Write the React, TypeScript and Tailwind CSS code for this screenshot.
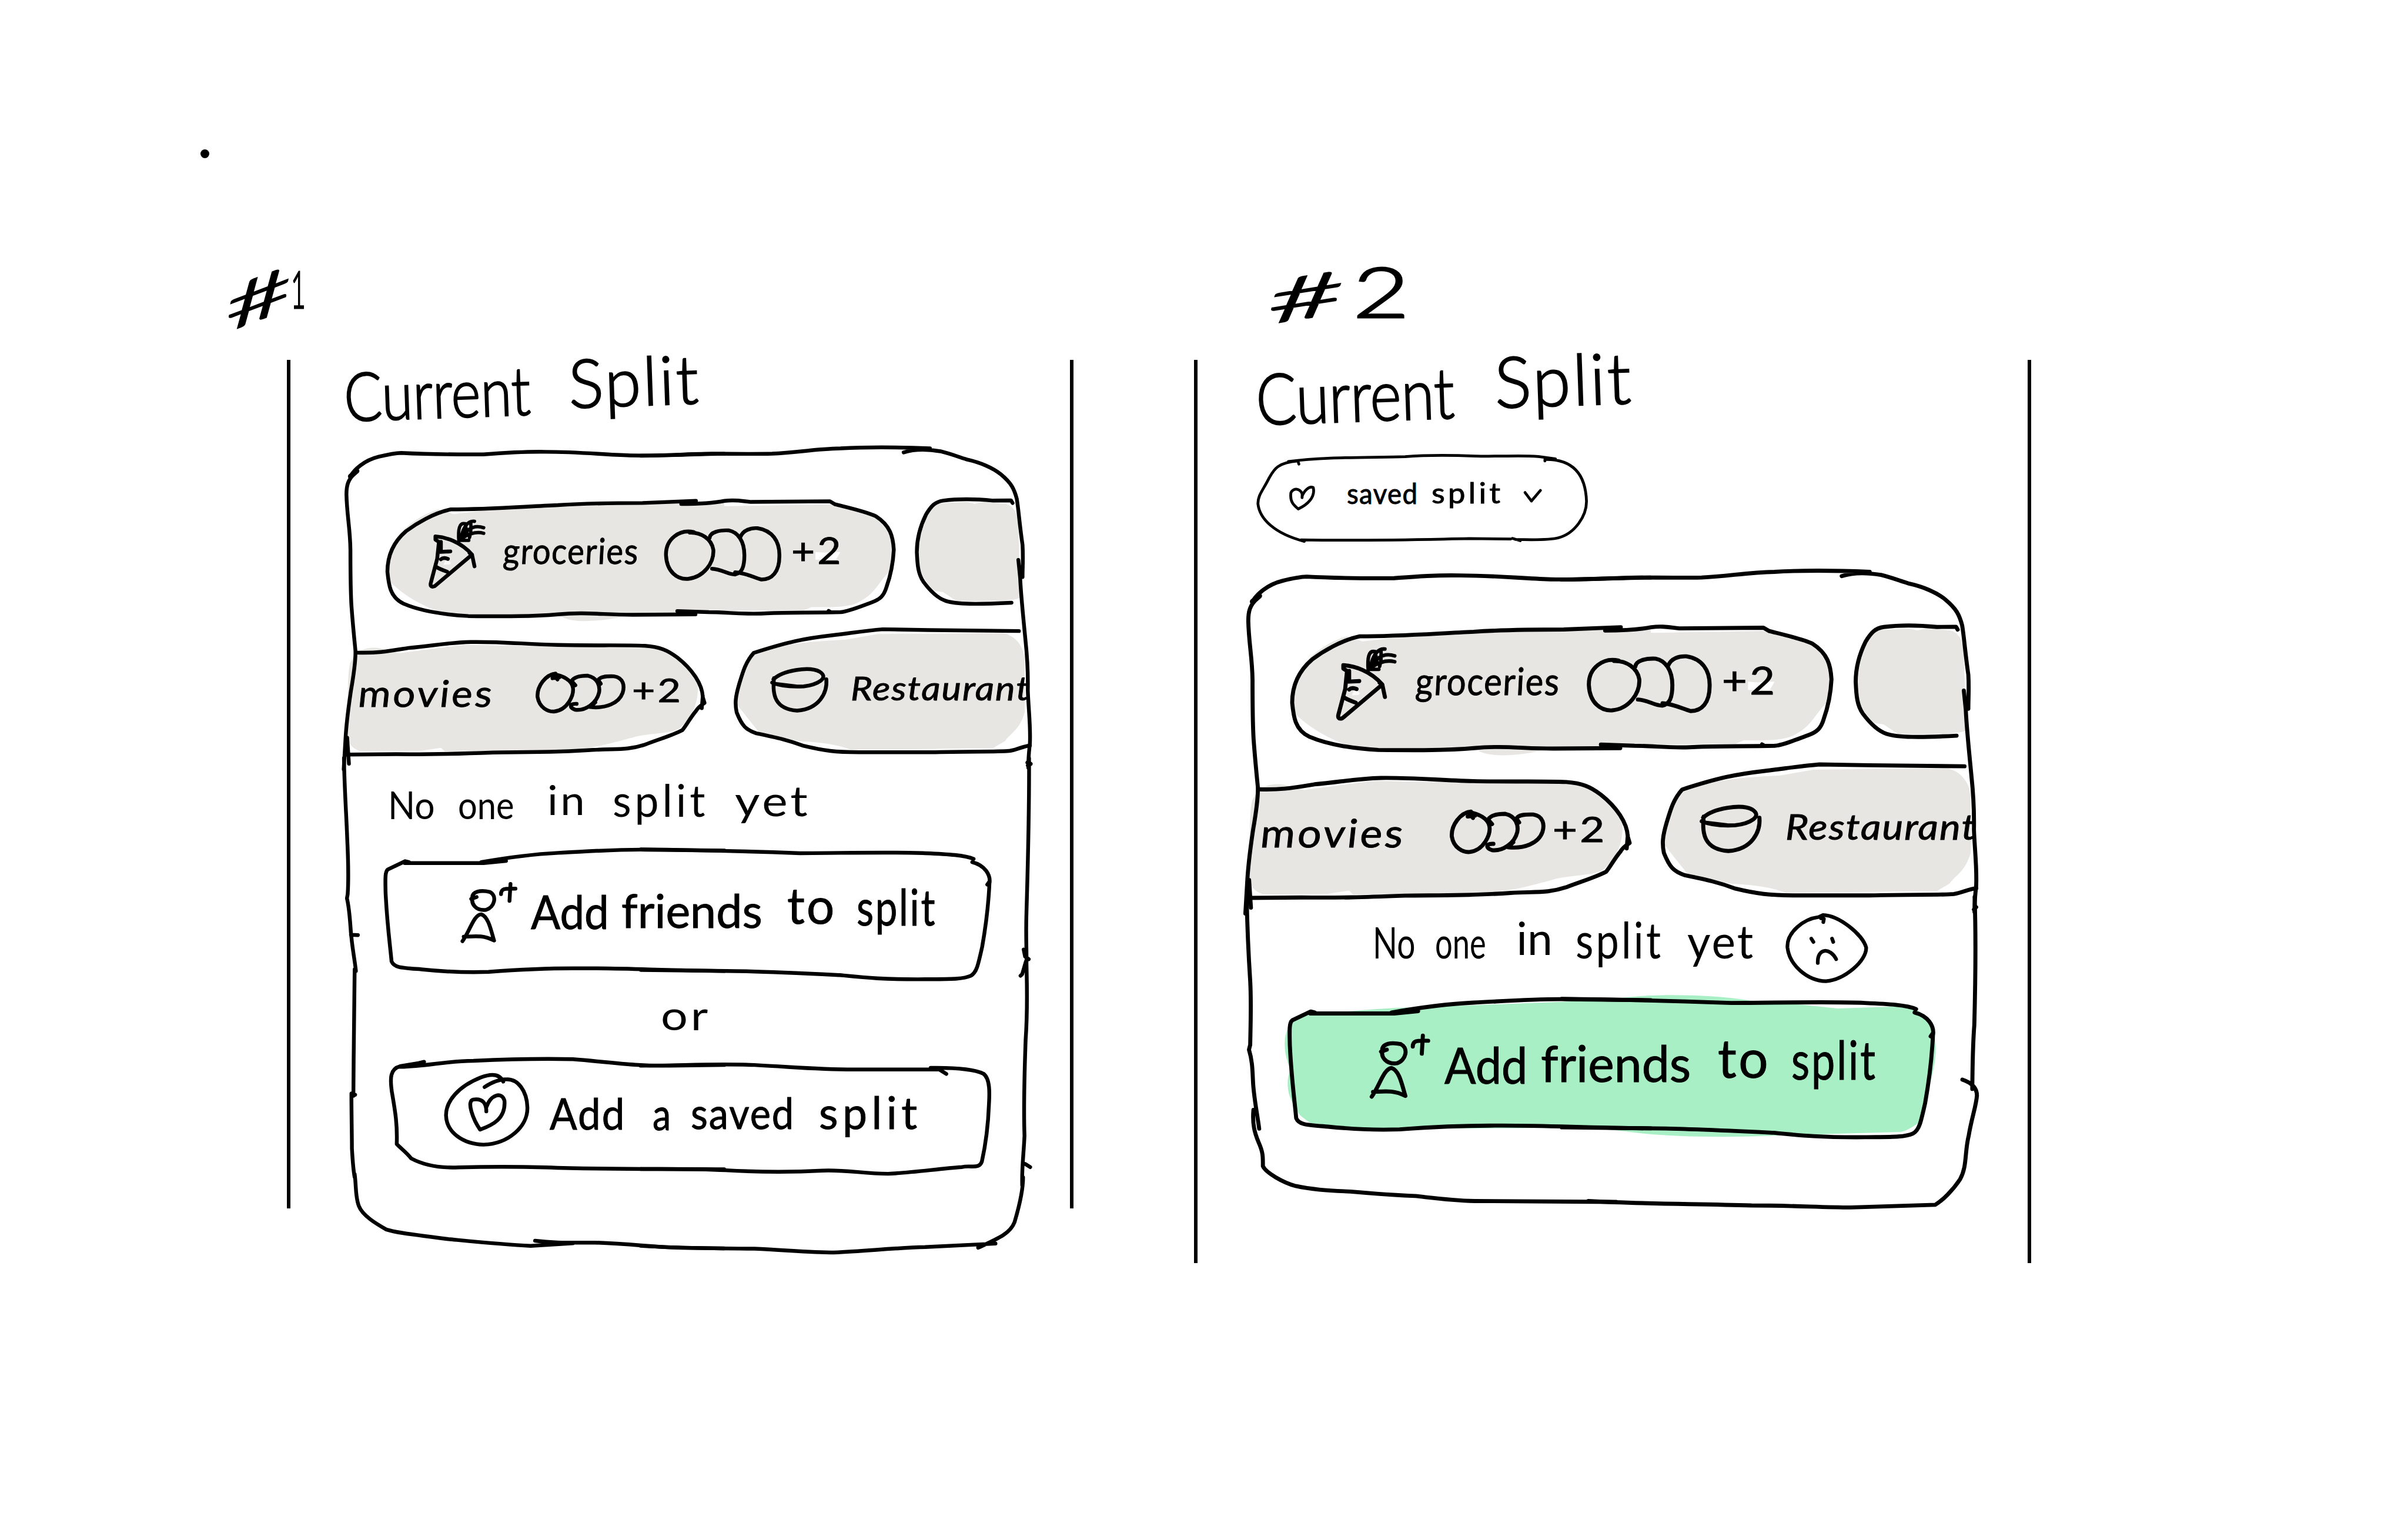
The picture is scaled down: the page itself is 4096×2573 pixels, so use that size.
import React, { useLayoutEffect, useRef } from "react";
import clsx from "clsx";

/* Each drawing sheet maps its own pen units onto the board's units. */
const SHEET = {
  topLeft: "translate(600 780) scale(0.44643 0.38265)",
  topRight: "translate(1150 780) scale(0.47194 0.39541)",
  lowLeft: "translate(600 1360) scale(0.44643 0.57398)",
  lowRight: "translate(1150 1360) scale(0.5102 0.57398)",
  pill: "translate(2120 440) scale(0.57398 0.38265)",
  footLeft: "translate(584.9 1344.6) scale(0.41918 0.37163)",
  footRight: "translate(1195.2 1344.6) scale(0.49105 0.37163)",
};
type SheetName = keyof typeof SHEET;

function Ink({ box, children }: { box: string; children: React.ReactNode }) {
  return (
    <svg
      viewBox={box}
      preserveAspectRatio="none"
      fill="none"
      className="pointer-events-none absolute inset-0 h-full w-full overflow-visible"
      aria-hidden="true"
    >
      {children}
    </svg>
  );
}

function Pen({ on, d, width = 6.8 }: { on: SheetName; d: string; width?: number }) {
  return (
    <g transform={SHEET[on]}>
      <path
        d={d}
        stroke="#000"
        strokeWidth={width}
        strokeLinecap="round"
        strokeLinejoin="round"
        vectorEffect="non-scaling-stroke"
      />
    </g>
  );
}

function Wash({ on, d, color = "#e7e6e2" }: { on: SheetName; d: string; color?: string }) {
  return (
    <g transform={SHEET[on]}>
      <path d={d} fill={color} />
    </g>
  );
}

/* A word stretched to the width of its box. */
function Word({ className, children }: { className: string; children: string }) {
  const box = useRef<HTMLDivElement>(null);
  const text = useRef<HTMLSpanElement>(null);
  useLayoutEffect(() => {
    if (box.current && text.current) {
      const ratio = box.current.offsetWidth / text.current.offsetWidth;
      text.current.style.transform = `scaleX(${ratio})`;
    }
  }, []);
  return (
    <div ref={box} className={clsx("relative z-10 shrink-0 leading-none whitespace-nowrap", className)}>
      <span ref={text} className="inline-block origin-left">
        {children}
      </span>
    </div>
  );
}

function GroceriesPill() {
  return (
    <div className="relative flex h-[190px] w-[909px] shrink-0 items-start">
      <Ink box="696 915 909 190">
        <Wash
          on="topLeft"
          d="M480 370 L620 352 L950 325 L1568 318 L1568 832 L1160 850 C1080 872 960 885 915 850 L550 850 L440 835 C340 795 270 740 228 690 C215 650 215 580 240 510 C260 450 340 375 420 348 Z"
        />
        <Wash
          on="topRight"
          d="M0 312 L200 312 L330 322 L720 314 C790 330 860 355 900 375 C950 410 962 460 962 530 C962 560 955 600 945 620 C910 660 890 720 840 750 C800 785 720 780 650 780 L620 795 L0 800Z"
        />
        <Wash on="topRight" color="#fff" d="M665 530 L700 533 L735 530 L760 530 L743 565 L665 565Z" />
        <Wash on="topLeft" color="#fbfbfa" d="M452 578 L470 598 L466 606 L440 608Z" />
        <Pen
          on="topLeft"
          d="M1455 308 L1240 318 C1100 318 1000 320 900 328 C760 335 620 348 470 348 C400 365 330 415 290 450 C240 500 215 560 215 640 C220 700 225 760 280 790 C340 820 420 840 540 848 C700 850 800 850 900 840 C1010 828 1080 842 1200 842 L1453 840"
        />
        <Pen
          on="topRight"
          d="M155 312 C240 312 290 305 320 298 C360 292 380 298 420 303 L720 300 L740 314 C800 332 860 348 895 368 C950 410 960 460 963 520 C960 590 950 640 935 690 C925 730 910 745 880 758 C830 780 790 800 760 803 C650 806 560 803 480 808 C400 815 330 803 260 803 L140 798 M715 797 L725 804"
        />
        <Pen
          on="topLeft"
          d="M408 475 C450 478 510 500 555 560 L405 708 C390 715 386 705 390 690 L415 580 L422 500 L408 490 L408 475 M430 500 L430 545 M418 548 L468 545 M430 582 C440 572 450 576 458 580 M412 618 C425 628 435 632 455 640 M545 552 L555 560 L565 615"
        />
        <Pen
          on="topLeft"
          width={6}
          d="M502 497 C498 440 505 410 525 415 M512 475 C520 430 540 400 565 404 M510 487 C530 445 560 418 602 434 M520 480 C540 465 570 450 602 460 M510 493 L542 493 M528 415 L536 470 M550 410 C552 440 550 460 545 480"
        />
        <Pen
          on="topRight"
          d="M203 440 C150 425 95 470 97 545 C100 620 140 655 180 652 C240 645 280 580 277 520 C270 470 230 440 187 442 M263 465 C265 440 300 430 335 432 C370 440 395 480 395 545 C395 600 385 625 360 632 C330 632 310 608 272 606 M380 462 C390 430 420 420 445 422 C500 432 530 480 528 550 C528 620 500 655 460 655 C430 645 400 625 360 622"
        />
      </Ink>
      <Word className="mt-[41px] ml-[208px] w-[244px] -skew-x-3 text-[64px] tracking-[0.03em] [-webkit-text-stroke:1px_black]">
        groceries
      </Word>
      <Word className="mt-[38px] ml-[272px] w-[93px] text-[66px] tracking-[0.06em] [-webkit-text-stroke:1px_black]">
        +2
      </Word>
    </div>
  );
}

function NextPill() {
  return (
    <div className="relative h-[190px] w-[187px] shrink-0">
      <Ink box="1645 915 187 190">
        <Wash
          on="topRight"
          d="M1120 310 L1240 303 L1270 312 L1300 303 L1390 312 C1420 325 1430 350 1435 400 L1445 735 C1430 755 1300 755 1200 752 L1150 712 L1115 706 C1060 640 1050 580 1052 500 C1060 400 1080 350 1120 310Z"
        />
        <Pen
          on="topRight"
          d="M1414 308 L1408 296 L1340 297 C1280 290 1210 288 1150 297 C1120 302 1105 320 1085 360 C1060 420 1050 470 1050 530 C1052 590 1055 630 1075 665 C1100 705 1130 740 1160 752 C1200 768 1280 768 1410 760"
        />
      </Ink>
    </div>
  );
}

function MoviesPill() {
  return (
    <div className="relative flex h-[210px] w-[642px] shrink-0 items-start">
      <Ink box="622 1148 642 210">
        <Wash
          on="topLeft"
          d="M90 1020 C140 990 180 998 205 1008 L260 1025 L520 985 L1300 1000 C1380 1030 1450 1120 1462 1180 C1466 1280 1420 1350 1385 1380 C1340 1405 1250 1400 1200 1420 C1100 1450 1040 1475 900 1480 L445 1485 L430 1468 L350 1482 L110 1485 C60 1470 55 1430 50 1390 C60 1280 50 1140 65 1070Z"
        />
        <Pen
          on="topLeft"
          d="M90 1022 C180 1025 220 1015 300 1000 C400 990 450 975 550 972 C680 970 760 982 900 986 C1050 990 1150 985 1250 990 C1310 995 1340 1010 1380 1045 C1440 1100 1480 1170 1482 1230 L1489 1258 C1475 1270 1465 1275 1455 1295 C1430 1330 1415 1365 1400 1385 C1360 1410 1300 1430 1250 1453 C1180 1480 1140 1472 1040 1478 C900 1490 800 1488 640 1490 C480 1497 400 1500 250 1498 L50 1500 M1482 1225 L1478 1282"
        />
        <Pen
          on="topLeft"
          d="M890 1120 C850 1125 815 1180 818 1230 C825 1280 860 1300 885 1298 C940 1290 965 1220 960 1185 C955 1150 920 1130 880 1122 L898 1148 M878 1142 L905 1138 M970 1175 L955 1155 C965 1135 990 1130 1020 1130 C1060 1140 1070 1180 1065 1210 C1055 1260 1010 1295 970 1290 C945 1280 945 1260 975 1262 M1072 1168 L1062 1150 C1070 1135 1090 1132 1125 1133 C1165 1140 1168 1180 1160 1210 C1145 1260 1090 1285 1030 1277 L1050 1255"
        />
      </Ink>
      <Word className="mt-[62px] ml-[22px] w-[244px] -skew-x-6 text-[66px] tracking-[0.06em] [-webkit-text-stroke:1px_black]">
        movies
      </Word>
      <Word className="mt-[59px] ml-[247px] w-[92px] text-[60px] tracking-[0.06em] [-webkit-text-stroke:1px_black]">
        +2
      </Word>
    </div>
  );
}

function RestaurantPill() {
  return (
    <div className="relative flex h-[210px] w-[532px] shrink-0 items-start">
      <Ink box="1318 1148 532 210">
        <Wash
          on="topRight"
          d="M900 905 L1380 900 C1440 920 1458 980 1460 1020 L1460 1260 C1440 1340 1410 1350 1385 1390 L1340 1422 L800 1430 C740 1400 660 1395 600 1390 L450 1350 C410 1290 375 1240 362 1215 C370 1120 390 1040 420 1000 C500 950 680 935 780 930Z"
        />
        <Pen
          on="topRight"
          d="M1438 891 C1200 888 1100 887 920 883 C850 890 800 900 730 910 C620 925 560 940 430 990 C400 1030 390 1070 375 1130 C360 1190 358 1220 365 1260 C385 1320 400 1340 440 1355 C520 1375 560 1385 620 1412 C700 1435 740 1440 830 1441 L1100 1441 C1250 1436 1350 1440 1400 1435 C1430 1430 1450 1415 1480 1410"
        />
        <Pen
          on="topRight"
          d="M505 1110 C540 1070 640 1050 680 1075 C720 1105 670 1135 620 1142 C570 1145 530 1140 500 1125 M507 1105 C500 1180 510 1245 595 1252 C680 1245 710 1170 706 1110 M507 1130 L590 1142"
        />
      </Ink>
      <Word className="mt-[55px] ml-[209px] w-[322px] text-[60px] italic tracking-[0.03em] [-webkit-text-stroke:1px_black]">
        Restaurant
      </Word>
    </div>
  );
}

function SavedSplits() {
  return (
    <>
      <div className="mt-[109px] ml-[74px] flex gap-10">
        <GroceriesPill />
        <NextPill />
      </div>
      <div className="mt-[43px] flex gap-[54px]">
        <MoviesPill />
        <RestaurantPill />
      </div>
    </>
  );
}

function CardTop() {
  return (
    <>
      <Pen
        on="topLeft"
        d="M66 195 C80 165 120 120 180 103 C215 93 240 86 270 85 C380 92 460 93 600 92 C690 84 760 78 850 80 C980 80 1070 92 1190 97 C1330 100 1450 90 1568 89"
      />
      <Pen on="topLeft" d="M92 170 L66 195" width={9} />
      <Pen
        on="topLeft"
        d="M85 180 C55 210 50 240 50 280 C52 380 65 440 66 540 C66 640 66 720 70 800 C75 880 80 940 86 1010 C88 1060 80 1120 68 1200 C58 1280 50 1340 46 1430 L39 1568 M53 1420 L60 1542"
      />
      <Pen
        on="topRight"
        d="M0 95 C80 95 170 88 270 86 C340 86 420 88 500 86 C600 80 660 65 760 62 C860 55 1000 57 1100 62 M1000 80 C1040 65 1090 65 1140 75 C1180 87 1200 97 1240 112 C1290 125 1340 150 1370 180 C1410 220 1420 245 1430 290 C1437 340 1440 400 1452 500 C1455 560 1452 600 1452 645 M1436 568 L1443 650 C1446 730 1455 830 1463 930 C1472 1030 1473 1100 1472 1160 C1475 1250 1483 1320 1480 1400 C1476 1440 1474 1470 1474 1510 M1480 1490 L1472 1500"
      />
    </>
  );
}

function AddFriendsButton({ filled = false }: { filled?: boolean }) {
  return (
    <div className="relative ml-[68px] flex h-[240px] w-[1087px] shrink-0 items-start [-webkit-text-stroke:1px_black]">
      <Ink box="690 1520 1087 240">
        {filled && (
          <>
            <Wash
              on="footLeft"
              color="#a9efc6"
              d="M350 548 C450 545 550 530 700 522 L960 512 L1568 485 L1568 1065 L780 1070 L540 1078 L340 1045 C300 1015 290 1005 285 985 C240 920 240 850 258 800 C225 720 230 640 256 600 C270 570 300 560 350 548Z"
            />
            <Wash
              on="footRight"
              color="#a9efc6"
              d="M0 490 L150 472 C250 460 420 460 560 490 L730 508 L855 525 L1080 515 C1150 530 1180 580 1185 640 C1200 720 1185 800 1165 900 C1160 980 1145 1040 1130 1045 C1110 1065 1090 1080 1070 1085 L870 1092 L560 1105 C400 1110 250 1105 130 1083 L0 1065Z"
            />
          </>
        )}
        <Pen
          on="lowLeft"
          d="M300 325 L285 322 L215 348 C203 355 205 380 206 420 C212 520 225 590 230 635 C240 655 270 655 350 660 C450 668 550 670 620 668 C760 660 850 657 960 657 C1150 655 1300 663 1568 665 M283 328 L600 328 L690 321 M590 325 C700 310 800 300 900 296 C1050 290 1130 285 1250 286 L1568 289"
        />
        <Pen
          on="lowRight"
          d="M0 285 C200 287 400 292 560 297 C750 296 900 293 1000 297 C1080 300 1140 303 1170 315 M1165 325 C1210 335 1230 365 1226 390 M1218 395 L1226 385 C1222 470 1210 540 1200 590 C1185 650 1180 670 1160 680 C1130 692 1080 690 1000 691 C850 692 780 685 700 678 C560 672 400 665 300 665 L0 662"
        />
        <Pen
          on="lowLeft"
          d="M550 440 L572 434 M555 440 C550 415 590 412 625 418 C655 430 645 465 610 474 C570 478 545 455 558 432 M515 572 C545 540 560 490 590 488 C620 495 630 540 642 570 C600 553 570 556 520 558 M670 425 C670 405 690 408 728 408 M708 393 L704 446"
        />
      </Ink>
      <Word className="mt-[73px] ml-[263px] w-[140px] text-[84px]">Add</Word>
      <Word className="mt-[70px] ml-[22px] w-[253px] text-[84px]">friends</Word>
      <Word className="mt-[58px] ml-[45px] w-[88px] text-[90px] tracking-[0.04em]">to</Word>
      <Word className="mt-[61px] ml-[36px] w-[144px] text-[90px] tracking-[0.04em]">split</Word>
    </div>
  );
}

function AddSavedButton() {
  return (
    <div className="relative ml-[78px] flex h-[210px] w-[1077px] shrink-0 items-start [-webkit-text-stroke:1px_black]">
      <Ink box="700 1895 1077 210">
        <Pen
          on="lowLeft"
          d="M362 948 L340 952 L265 962 C225 970 225 1000 232 1040 C245 1100 255 1140 252 1205 C270 1220 290 1230 310 1250 C370 1275 440 1280 500 1278 C650 1275 750 1276 850 1278 C1100 1285 1300 1282 1568 1284 M265 964 C380 962 450 945 560 945 C700 940 850 938 960 940 C1100 948 1200 962 1350 960 L1568 958"
        />
        <Pen
          on="lowRight"
          d="M0 960 C150 960 250 953 400 958 C550 965 620 972 750 972 L1050 972 L1075 986 M1020 967 C1100 966 1170 970 1205 985 C1230 1000 1227 1050 1225 1080 C1222 1150 1215 1200 1200 1260 C1190 1285 1160 1270 1130 1277 C1050 1282 950 1295 870 1298 C780 1297 720 1285 640 1288 C500 1295 400 1292 300 1287 C200 1282 100 1283 0 1283"
        />
        <Pen
          on="lowLeft"
          d="M680 1010 C665 985 630 985 590 997 C500 1025 450 1070 450 1115 C452 1170 520 1205 600 1207 C700 1205 780 1150 777 1090 C775 1040 740 1000 690 1003 C660 1003 635 1012 605 1027 M612 1103 C612 1080 600 1062 560 1066 C530 1070 560 1130 587 1160 C640 1145 690 1125 685 1070 C675 1040 630 1050 612 1090"
        />
      </Ink>
      <Word className="mt-[64px] ml-[287px] w-[136px] text-[77px] tracking-[0.03em]">Add</Word>
      <Word className="mt-[62px] ml-[48px] w-[33px] text-[80px]">a</Word>
      <Word className="mt-[63px] ml-[36px] w-[187px] text-[77px] tracking-[0.03em]">saved</Word>
      <Word className="mt-[59px] ml-[43px] w-[184px] text-[80px] tracking-[0.1em]">split</Word>
    </div>
  );
}

function FirstCard() {
  return (
    <div className="relative ml-[101px] flex h-[1434px] w-[1228px] flex-col">
      <SavedSplits />
      <div className="flex h-[162px] items-start">
        <Word className="mt-[49px] ml-[75px] w-[84px] text-[70px]">No</Word>
        <Word className="mt-[49px] ml-[41px] w-[101px] text-[70px]">one</Word>
        <Word className="mt-[38px] ml-[60px] w-[72px] text-[74px] tracking-[0.06em]">in</Word>
        <Word className="mt-[36px] ml-[45px] w-[172px] text-[80px] tracking-[0.08em]">split</Word>
        <Word className="mt-[38px] ml-[47px] w-[136px] text-[76px] tracking-[0.06em]">yet</Word>
      </div>
      <AddFriendsButton />
      <div className="flex h-[135px] items-start">
        <Word className="mt-[22px] ml-[564px] w-[90px] text-[74px] tracking-[0.06em]">or</Word>
      </div>
      <AddSavedButton />
      <Ink box="622 806 1228 1434">
        <CardTop />
        <Pen
          on="lowLeft"
          d="M40 0 C42 100 50 180 53 250 C58 330 58 390 55 425 L52 438 C65 480 66 540 70 560 C75 600 83 630 88 665 M68 552 L96 553 M83 660 C82 750 80 850 79 940 C79 990 78 1020 78 1055 M85 1052 L70 1048 C70 1110 72 1180 72 1220 C75 1260 77 1285 83 1310 M83 1300 C90 1340 85 1370 100 1400 C115 1430 170 1455 210 1473 C270 1487 340 1490 460 1503 C580 1512 680 1520 790 1524 L960 1516 M808 1508 C880 1515 930 1514 1050 1514 C1200 1518 1280 1528 1400 1530 L1568 1532"
        />
        <Pen
          on="lowRight"
          d="M1366 0 C1367 150 1362 330 1357 480 C1354 560 1358 600 1357 640 C1358 700 1362 780 1354 880 C1350 980 1346 1080 1350 1180 C1347 1240 1340 1280 1342 1335 M1372 18 L1360 14 M1347 598 L1352 620 L1365 628 M1355 635 L1342 675 L1336 680 M1352 1268 L1370 1278 M1345 1310 C1345 1360 1325 1420 1315 1450 C1300 1485 1260 1500 1187 1530 M0 1524 C100 1530 220 1532 400 1533 C520 1538 600 1545 680 1545 C800 1540 900 1530 1000 1528 L1248 1517"
        />
      </Ink>
    </div>
  );
}

function SecondCard() {
  return (
    <div className="relative flex h-[1255px] w-[1228px] flex-col [zoom:1.065]">
      <SavedSplits />
      <div className="relative flex h-[162px] items-start">
        <Word className="mt-[35px] ml-[210px] w-[72px] text-[72px]">No</Word>
        <Word className="mt-[35px] ml-[33px] w-[86px] text-[72px]">one</Word>
        <Word className="mt-[25px] ml-[51px] w-[61px] text-[76px]">in</Word>
        <Word className="mt-[24px] ml-[38px] w-[148px] text-[84px] tracking-[0.06em]">split</Word>
        <Word className="mt-[30px] ml-[41px] w-[114px] text-[78px] tracking-[0.04em]">yet</Word>
        <Ink box="622 1358 1228 162">
          <Pen
            on="footRight"
            width={6.2}
            d="M790 112 C740 120 680 180 683 250 C690 330 750 400 815 403 C880 395 955 310 953 250 C940 190 860 105 805 103 L790 112 M798 118 L808 120 L806 135 M765 210 L772 225 M836 210 L840 225 M787 320 C785 250 830 250 850 303"
          />
        </Ink>
      </div>
      <AddFriendsButton filled />
      <Ink box="622 806 1228 1255">
        <CardTop />
        <Pen
          on="footLeft"
          d="M83 30 C85 150 90 280 97 400 C102 500 98 620 97 690 L92 712 C105 760 106 800 108 850 C110 920 125 1000 133 1070 M110 985 C105 1050 115 1090 130 1130 C150 1180 148 1200 148 1240 C160 1270 230 1315 280 1330 C340 1345 400 1350 500 1355 C600 1365 650 1370 760 1375 C840 1385 900 1395 1000 1398 L1568 1402"
        />
        <Pen
          on="footRight"
          d="M0 1398 C200 1412 350 1410 560 1418 C700 1418 800 1427 900 1427 C1000 1422 1100 1418 1190 1415 C1215 1395 1250 1350 1275 1300 C1300 1240 1290 1180 1305 1100 C1315 1020 1330 970 1333 920 C1333 880 1310 860 1283 848 M1325 20 C1330 200 1328 400 1324 600 C1318 700 1318 800 1317 890"
        />
      </Ink>
    </div>
  );
}

function SavedSplitSelect() {
  return (
    <div className="relative ml-[109px] flex h-[156px] w-[591px] items-start">
      <Ink box="2257 815 591 156">
        <Pen
          on="pill"
          width={5}
          d="M368 1025 L365 1010 C300 1018 290 1050 275 1090 C255 1150 240 1170 240 1210 C245 1280 290 1350 385 1387 M375 1380 C600 1385 750 1378 900 1374 L1030 1376 M1035 1373 L1060 1384 M1045 1378 C1090 1380 1150 1382 1180 1370 C1230 1350 1267 1270 1267 1200 C1265 1100 1240 1000 1137 1003 L1137 1010 M335 1013 C450 990 580 995 700 990 C780 980 850 983 920 987 C1000 990 1080 982 1120 990 L1170 1000"
        />
        <Pen
          on="pill"
          width={5}
          d="M378 1182 C383 1140 350 1130 343 1160 C340 1200 350 1215 366 1235 C395 1215 420 1180 413 1135 C400 1125 385 1150 378 1175 M1075 1158 L1095 1198 L1123 1148"
        />
      </Ink>
      <Word className="mt-[45px] ml-[160px] w-[128px] text-[50px] tracking-[0.03em] [-webkit-text-stroke:1px_black]">
        saved
      </Word>
      <Word className="mt-[43px] ml-[24px] w-[129px] text-[52px] tracking-[0.1em] [-webkit-text-stroke:1px_black]">
        split
      </Word>
    </div>
  );
}

export default function App() {
  return (
    <div className="h-[2573px] w-[4096px] overflow-hidden bg-white">
      <div className="flex h-[2714px] w-[4320px] flex-col bg-white font-['Lato','Liberation_Sans',sans-serif] text-black [zoom:0.948148]">
        <header className="h-[480px] shrink-0 pt-[268px] pl-[360px]">
          <div className="size-4 rounded-full bg-black" />
        </header>
        <main className="flex items-start gap-[216px] pl-[409px]">
          <section className="w-[1517px] shrink-0">
            <div className="flex h-[165px] items-start [-webkit-text-stroke:3px_black]">
              <Word className="mt-[1px] -mr-[4px] -ml-[8px] w-[125px] skew-x-6 -skew-y-[20deg] text-[104px] font-light">
                #
              </Word>
              <Word className="-mt-[9px] ml-0 w-[26px] text-[92px] font-light">1</Word>
            </div>
            <div className="ml-[106px] h-[1522px] border-x-[7px] border-black">
              <h2 className="flex h-[161px] items-start font-light [-webkit-text-stroke:2.5px_black]">
                <Word className="-mt-[2px] ml-[96px] w-[335px] -rotate-2 text-[121px]">Current</Word>
                <Word className="-mt-[24px] ml-[68px] w-[236px] -rotate-2 text-[121px] tracking-[0.03em]">Split</Word>
              </h2>
              <div className="-ml-px">
                <FirstCard />
              </div>
            </div>
          </section>
          <section className="w-[1502px] shrink-0">
            <div className="flex h-[165px] items-start [-webkit-text-stroke:3px_black]">
              <Word className="-mt-[3px] ml-[132px] w-[137px] -skew-y-[9deg] text-[106px] font-light">#</Word>
              <Word className="-mt-[20px] ml-[16px] w-[102px] text-[124px] font-light">2</Word>
            </div>
            <div className="h-[1620px] border-x-[7px] border-black">
              <h2 className="flex h-[170px] items-start font-light [-webkit-text-stroke:2.5px_black]">
                <Word className="-mt-[1px] ml-[104px] w-[356px] -rotate-2 text-[127px]">Current</Word>
                <Word className="-mt-[29px] ml-[73px] w-[248px] -rotate-2 text-[127px] tracking-[0.03em]">Split</Word>
              </h2>
              <div className="-ml-px">
                <SavedSplitSelect />
              </div>
              <div className="mt-[56px] ml-[91px]">
                <SecondCard />
              </div>
            </div>
          </section>
        </main>
      </div>
    </div>
  );
}
